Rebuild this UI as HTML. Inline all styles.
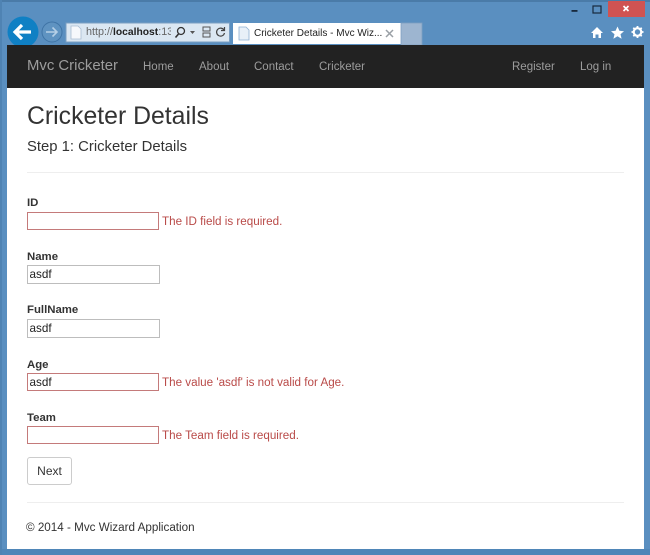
<!DOCTYPE html>
<html><head><meta charset="utf-8"><style>
*{box-sizing:border-box}
html,body{margin:0;padding:0}
body{width:650px;height:555px;position:relative;overflow:hidden;background:#5a8fc0;font-family:"Liberation Sans",sans-serif;color:#333}
.a{position:absolute;white-space:nowrap}
.nav{font-size:11.5px;color:#9d9d9d;top:60px;line-height:14px}
.lb{font-size:11.4px;font-weight:bold;color:#333;left:27px;line-height:14px}
.in{position:absolute;left:27px;width:133px;height:19px;border:1px solid #bdbdbd;background:#fff;font-size:11.7px;line-height:18px;padding-left:1.500px;color:#222}
.bad{width:131.500px;border-color:#c47a7a;height:18px;line-height:17px}
.er{font-size:11.65px;color:#b94a48;left:162px;line-height:14px}
</style></head><body>
<div class="a" style="left:0;top:0;width:650px;height:2px;background:#4a7ba8"></div>
<div class="a" style="left:0;top:549px;width:650px;height:6px;background:#4f86b8"></div>
<div class="a" style="left:0;top:0;width:2px;height:555px;background:#4f83b3"></div>

<svg class="a" style="left:0;top:0" width="650" height="46" viewBox="0 0 650 46">
<circle cx="23" cy="32" r="15.5" fill="#0f80c4"/>
<path d="M15.500 32H31M22 25l-7 7 7 7" fill="none" stroke="#fff" stroke-width="3.200"/>
<circle cx="52" cy="32" r="10" fill="#5f93c1" stroke="#3f74a6"/>
<path d="M46 32h11M52.500 27.500l4.500 4.500-4.500 4.500" fill="none" stroke="#b5cfe6" stroke-width="1.600"/>
<rect x="66" y="23" width="163.500" height="19" fill="#dbe7f2" stroke="#7b9fc2"/>
<path d="M71 26h7l3 3v10H71z" fill="#f6f8fb" stroke="#a9bdd2" stroke-width=".8"/>
<circle cx="181" cy="31" r="3.500" fill="none" stroke="#333" stroke-width="1.300"/>
<path d="M178.500 34l-3 3.500" stroke="#333" stroke-width="1.600"/>
<path d="M190 31h5l-2.500 3z" fill="#555"/>
<path d="M203 27h7v4h-7zM203 33h7v4h-7z" fill="none" stroke="#555" stroke-width="1"/>
<path d="M224 30a4 4 0 1 0 .5 3M224.500 27v3.500H221" fill="none" stroke="#444" stroke-width="1.200"/>
<rect x="233" y="23" width="168" height="21" fill="#fff"/>
<rect x="401" y="23" width="21" height="22" fill="#9db5d0" stroke="#7f9fc0" stroke-width=".8"/>
<path d="M239 27h7l3 3v10H239z" fill="#e8f0f8" stroke="#8fb0d2" stroke-width=".8"/>
<path d="M386 30l7 7M393 30l-7 7" stroke="#9aa0a6" stroke-width="1.500"/>
<rect x="571.500" y="10" width="6" height="1.800" fill="#17293d"/>
<rect x="593" y="6" width="8" height="7" fill="none" stroke="#17293d" stroke-width="1.200"/>
<rect x="608" y="1" width="37" height="16" fill="#cf5352"/>
<path d="M623.500 6l5 5M628.500 6l-5 5" stroke="#fff" stroke-width="1.700"/>
<path d="M591 33l6-6 6 6h-2v5h-2.500v-3.500h-3V38H593v-5z" fill="#fff"/>
<path d="M617.500 26.500l1.900 4.300 4.600.4-3.500 3 1.100 4.500-4.100-2.400-4.100 2.400 1.100-4.500-3.500-3 4.600-.4z" fill="#fff"/>
<circle cx="637.500" cy="32" r="3.800" fill="none" stroke="#fff" stroke-width="2.200"/>
<path d="M637.500 26v2.500M637.500 35.500V38M631.500 32H634M641 32h2.500M633.300 27.800l1.700 1.700M640 34.500l1.700 1.700M641.700 27.800L640 29.500M635 34.500l-1.700 1.700" stroke="#fff" stroke-width="1.800"/>
</svg>
<div class="a" style="left:86px;top:26px;font-size:10.800px;line-height:13px;color:#666;width:85px;overflow:hidden">http://<b style="color:#222;font-size:10.300px">localhost</b>:13</div>
<div class="a" style="left:254px;top:27px;font-size:10px;line-height:13px;color:#222">Cricketer Details - Mvc Wiz...</div>

<div class="a" style="left:7px;top:45px;width:637px;height:504px;background:#fff"></div>
<div class="a" style="left:7px;top:45px;width:637px;height:43px;background:#222"></div>
<div class="a" style="left:27px;top:58px;font-size:14.900px;line-height:17px;color:#9d9d9d">Mvc Cricketer</div>
<div class="a nav" style="left:143px">Home</div>
<div class="a nav" style="left:199px">About</div>
<div class="a nav" style="left:254px">Contact</div>
<div class="a nav" style="left:319px">Cricketer</div>
<div class="a nav" style="left:512px">Register</div>
<div class="a nav" style="left:580px">Log in</div>

<div class="a" style="left:27px;top:102px;font-size:24.800px;line-height:30px;font-weight:normal;color:#333">Cricketer Details</div>
<div class="a" style="left:27px;top:139px;font-size:14.850px;line-height:17px;color:#333">Step 1: Cricketer Details</div>
<div class="a" style="left:27px;top:172px;width:597px;height:1px;background:#eee"></div>

<div class="a lb" style="top:196px">ID</div>
<div class="in bad" style="top:212px"></div>
<div class="a er" style="top:215px">The ID field is required.</div>

<div class="a lb" style="top:250px">Name</div>
<div class="in" style="top:265px">asdf</div>

<div class="a lb" style="top:303px">FullName</div>
<div class="in" style="top:319px">asdf</div>

<div class="a lb" style="top:358px">Age</div>
<div class="in bad" style="top:373px">asdf</div>
<div class="a er" style="top:376px">The value 'asdf' is not valid for Age.</div>

<div class="a lb" style="top:411px">Team</div>
<div class="in bad" style="top:426px"></div>
<div class="a er" style="top:429px">The Team field is required.</div>

<div class="a" style="left:27px;top:457px;width:45px;height:28px;border:1px solid #ccc;border-radius:3px;background:#fff;font-size:12px;line-height:26px;text-align:center;color:#333">Next</div>
<div class="a" style="left:27px;top:502px;width:597px;height:1px;background:#eee"></div>
<div class="a" style="left:26px;top:521px;font-size:11.670px;line-height:14px;color:#333">© 2014 - Mvc Wizard Application</div>
</body></html>
